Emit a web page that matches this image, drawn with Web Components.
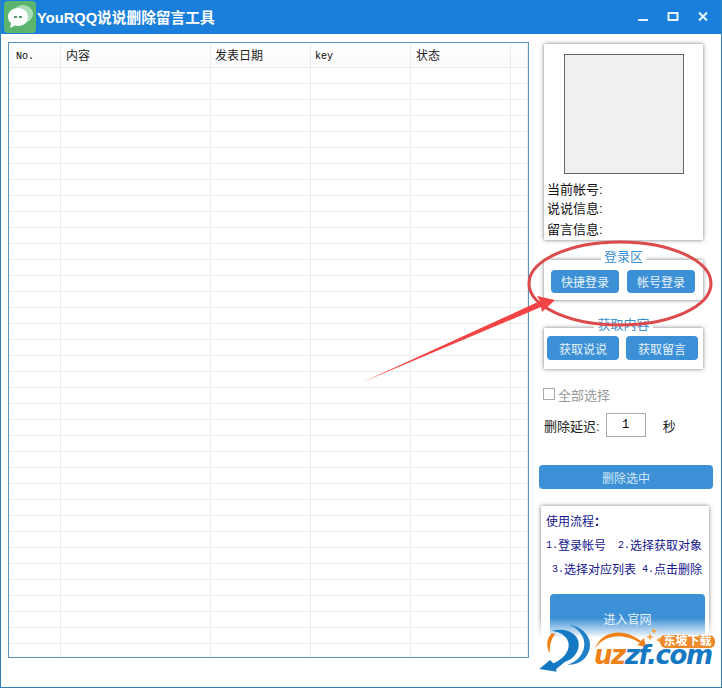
<!DOCTYPE html>
<html lang="zh">
<head>
<meta charset="utf-8">
<title>YouRQQ说说删除留言工具</title>
<style>
  html, body { margin: 0; padding: 0; background: #fff; }
  body { font-family: "Liberation Sans", "Noto Sans CJK SC", sans-serif; font-size: 13px; color: #111; }
</style>
</head>
<body>
<app-window>
  <title-bar slot="title" text="YouRQQ说说删除留言工具"></title-bar>
  <data-table slot="main"></data-table>

  <info-panel slot="side"></info-panel>

  <group-box slot="side" label="登录区" style="margin-top:20px; height:40px; padding:10px 8px 0 7px; gap:8px;">
    <flat-button style="width:68px; height:23px;">快捷登录</flat-button>
    <flat-button style="width:68px; height:23px;">帐号登录</flat-button>
  </group-box>

  <group-box slot="side" label="获取内容" style="margin-top:28px; height:41px; padding:8px 5px 0 3px; gap:7px;">
    <flat-button style="width:72px; height:24px;">获取说说</flat-button>
    <flat-button style="width:72px; height:24px;">获取留言</flat-button>
  </group-box>

  <delete-options slot="side"></delete-options>
  <flat-button slot="side" class="wide" style="display:flex; width:174px; height:24px; margin:28px 0 0 -5px; color:#d5e8f7;">删除选中</flat-button>
  <help-panel slot="side"></help-panel>

  <callout-mark slot="over"></callout-mark>
  <site-watermark slot="over"></site-watermark>
</app-window>

<script>
const CJK = '"Liberation Sans", "Noto Sans CJK SC", sans-serif';

class AppWindow extends HTMLElement {
  constructor() {
    super();
    const shadow = this.attachShadow({ mode: 'open' });
    shadow.innerHTML = `
      <style>
        :host { display: flex; flex-direction: column; position: relative; width: 722px; height: 688px;
                box-sizing: border-box; border: 1px solid #2f82b8; border-top: 0; background: #fff; overflow: hidden; }
        .body { display: flex; flex: 1; padding: 8px 8px 0 7px; gap: 15px; }
        .side { display: flex; flex-direction: column; width: 164px; padding-top: 2px; }
      </style>
      <slot name="title"></slot>
      <div class="body">
        <slot name="main"></slot>
        <div class="side"><slot name="side"></slot></div>
      </div>
      <slot name="over"></slot>`;
  }
}

class TitleBar extends HTMLElement {
  constructor() {
    super();
    const shadow = this.attachShadow({ mode: 'open' });
    const text = this.getAttribute('text') || '';
    shadow.innerHTML = `
      <style>
        :host { display: flex; align-items: center; height: 34px; margin: 0 -1px; background: #1a7fdb; color: #fff; flex: none; }
        .icon { width: 32px; height: 32px; margin: 0 1px 0 4px; }
        .name { font: bold 14.7px ${CJK}; flex: 1; padding-bottom: 2px; }
        .ctl { display: flex; align-items: center; gap: 18px; margin-right: 13px; }
        svg.c { display: block; width: 12px; height: 12px; }
      </style>
      <svg class="icon" viewBox="0 0 32 32">
        <rect width="32" height="32" rx="4" fill="#5cb56f"/>
        <ellipse cx="19" cy="13" rx="10" ry="9" fill="#a9dcb5"/>
        <path d="M14 7c6 0 10 4 10 9s-4 9-10 9c-1 0-2 0-3-.4L6 27l1-5c-2-1.500-3-3.800-3-6 0-5 4-9 10-9z" fill="#fff"/>
        <rect x="10" y="15" width="3" height="2" fill="#5a9a70"/>
        <rect x="15" y="15" width="3" height="2" fill="#5a9a70"/>
      </svg>
      <div class="name">${text}</div>
      <div class="ctl">
        <svg class="c" viewBox="0 0 12 12"><rect x="1" y="8" width="10" height="2" fill="#e4f6fc"/></svg>
        <svg class="c" viewBox="0 0 12 12"><rect x="1.500" y="2" width="9" height="7" fill="none" stroke="#e4f6fc" stroke-width="2"/></svg>
        <svg class="c" viewBox="0 0 12 12"><path d="M2 1.500l8 8M10 1.500l-8 8" fill="none" stroke="#e4f6fc" stroke-width="2"/></svg>
      </div>`;
  }
}

class DataTable extends HTMLElement {
  constructor() {
    super();
    const shadow = this.attachShadow({ mode: 'open' });
    const widths = [52, 150, 100, 100, 100, 17];
    const cols = widths.map(w => w + 'px').join(' ');
    const heads = [['No.', 'm first'], ['内容', ''], ['发表日期', 'tight'], ['key', 'm tight'], ['状态', ''], ['', '']];
    const head = heads.map(h => `<div class="th ${h[1]}">${h[0]}</div>`).join('');
    let rows = '';
    for (let i = 0; i < 37; i++) {
      rows += `<div class="row">${widths.map(() => '<div class="td"></div>').join('')}</div>`;
    }
    shadow.innerHTML = `
      <style>
        :host { display: block; width: 521px; height: 616px; box-sizing: border-box; border: 1px solid #5a94b8; background: #fff; overflow: hidden; flex: none; }
        .row, .head { display: grid; grid-template-columns: ${cols}; }
        .head { height: 24px; border-bottom: 1px solid #ececec; background: linear-gradient(#fff, #fbfbfb); }
        .row { height: 15px; border-bottom: 1px solid #ececec; }
        .th { font: 12px ${CJK}; line-height: 27px; padding-left: 5px; border-right: 1px solid #ececec; color: #222; }
        .th.m { font: 10px "Liberation Mono", monospace; line-height: 27px; color: #000; padding-left: 5px; }
        .th.first { padding-left: 7px; }
        .th.tight { padding-left: 4px; }
        .td { border-right: 1px solid #ececec; }
      </style>
      <div class="head">${head}</div>
      ${rows}`;
  }
}

class InfoPanel extends HTMLElement {
  constructor() {
    super();
    const shadow = this.attachShadow({ mode: 'open' });
    shadow.innerHTML = `
      <style>
        :host { display: block; width: 159px; height: 196px; box-sizing: border-box; padding-top: 10px; background: #fff;
                box-shadow: 0 0 4px #777; font: 13px ${CJK}; color: #111; }
        .pic { width: 120px; height: 120px; box-sizing: border-box; margin: 0 0 0 20px; background: #f0f0f0; border: 1px solid #666; }
        .lines { margin: 6px 0 0 3px; }
        .lines div { height: 20px; line-height: 20px; }
      </style>
      <div class="pic"></div>
      <div class="lines"><div style="height:19px">当前帐号:</div><div style="height:21px">说说信息:</div><div>留言信息:</div></div>`;
  }
}

class GroupBox extends HTMLElement {
  constructor() {
    super();
    const shadow = this.attachShadow({ mode: 'open' });
    shadow.innerHTML = `
      <style>
        :host { display: flex; position: relative; width: 159px; box-sizing: border-box; background: #fff; box-shadow: 0 0 4px #777; }
        .legend { position: absolute; left: 0; right: 0; top: -14px; text-align: center; line-height: 18px; font: 13px ${CJK}; color: #3a8fd0; }
        .legend span { background: #fff; padding: 0 3px; }
      </style>
      <div class="legend"><span>${this.getAttribute('label') || ''}</span></div>
      <slot></slot>`;
  }
}

class FlatButton extends HTMLElement {
  constructor() {
    super();
    const shadow = this.attachShadow({ mode: 'open' });
    shadow.innerHTML = `
      <style>
        :host { display: inline-flex; align-items: center; justify-content: center; flex: none; box-sizing: border-box;
                background: #3c90d6; color: #e8f3fb; border-radius: 4px; font: 12px ${CJK}; }
      </style>
      <slot></slot>`;
  }
}

class DeleteOptions extends HTMLElement {
  constructor() {
    super();
    const shadow = this.attachShadow({ mode: 'open' });
    shadow.innerHTML = `
      <style>
        :host { display: block; font: 13px ${CJK}; color: #222; margin-top: 19px; }
        .check { display: flex; align-items: center; height: 12px; gap: 3px; color: #9a9a9a; margin-left: -1px; }
        .box { width: 12px; height: 12px; box-sizing: border-box; border: 1px solid #aaa; background: #fff; }
        .delay { display: flex; align-items: center; margin-top: 13px; height: 24px; }
        .input { width: 40px; height: 24px; box-sizing: border-box; border: 1px solid #aaa; margin-left: 6px; text-align: center;
                 font: 12px "Liberation Mono", monospace; line-height: 22px; color: #000; }
        .unit { margin-left: 17px; }
      </style>
      <div class="check"><span class="box"></span><span>全部选择</span></div>
      <div class="delay"><span>删除延迟:</span><span class="input">1</span><span class="unit">秒</span></div>`;
  }
}

class HelpPanel extends HTMLElement {
  constructor() {
    super();
    const shadow = this.attachShadow({ mode: 'open' });
    shadow.innerHTML = `
      <style>
        :host { display: block; width: 168px; height: 170px; box-sizing: border-box; margin: 17px 0 0 -3px; padding: 4px 5px 0 5px;
                background: #fff; box-shadow: 0 0 4px #777; font: 12px ${CJK}; color: #14148c; }
        .line { display: flex; height: 24px; line-height: 24px; white-space: nowrap; }
        .n { display: inline-block; width: 12px; font: 10px/24px "Liberation Mono", monospace; }
        .go { height: 48px; margin: 12px 0 0 4px; width: 155px; background: #3c90d6; color: #e8f3fb; border-radius: 4px;
              display: flex; align-items: center; justify-content: center; }
      </style>
      <div class="line">使用流程<b>：</b></div>
      <div class="line"><span class="n">1.</span><span>登录帐号</span><span class="n" style="margin-left:12px">2.</span><span>选择获取对象</span></div>
      <div class="line" style="padding-left:6px"><span class="n">3.</span><span>选择对应列表</span><span class="n" style="margin-left:6px">4.</span><span>点击删除</span></div>
      <div class="go">进入官网</div>`;
  }
}

class CalloutMark extends HTMLElement {
  constructor() {
    super();
    const shadow = this.attachShadow({ mode: 'open' });
    shadow.innerHTML = `
      <style>
        :host { position: absolute; left: -1px; top: 0; width: 722px; height: 688px; pointer-events: none; }
        svg { display: block; }
      </style>
      <svg width="722" height="688" viewBox="0 0 722 688">
        <ellipse cx="620" cy="283.500" rx="91" ry="41.500" fill="none" stroke="#dc4a4c" stroke-width="3"/>
        <polygon points="363,382 540,301 537,296 555,300 542,312 541,307" fill="#f24444"/>
      </svg>`;
  }
}

class SiteWatermark extends HTMLElement {
  constructor() {
    super();
    const shadow = this.attachShadow({ mode: 'open' });
    shadow.innerHTML = `
      <style>
        :host { position: absolute; left: 529px; top: 618px; width: 191px; height: 69px; pointer-events: none; }
        .fade { position: absolute; left: 0; right: 0; top: 0; bottom: 0;
                background: linear-gradient(rgba(255,255,255,0), #fff 20px); }
        svg { position: absolute; left: 0; top: 0; }
        .site { position: absolute; left: 64px; top: 32px; font: italic bold 26px "DejaVu Sans", sans-serif; line-height: 10px;
                letter-spacing: -1.4px; white-space: nowrap; color: #1478c2; }
        .site b { color: #f08018; font-weight: bold; }
        .tag { position: absolute; left: 130px; top: 17px; width: 55px; height: 13px; background: #ef8a2c;
               border-radius: 5px 6px 5px 6px; color: #fff; font: bold 12px ${CJK}; line-height: 13px; text-align: center; }
      </style>
      <div class="fade"></div>
      <svg width="191" height="69" viewBox="0 0 191 69">
        <g transform="translate(6 2) scale(.3333)">
          <path d="M100 14C145 22 170 55 160 90 152 118 128 135 95 134 125 125 145 100 145 72 145 45 125 25 100 14z" fill="#1f80c8"/>
          <path d="M48 32C85 22 132 38 128 78 126 100 110 118 86 126L60 148 62 155 10 147 42 120 52 130C75 120 100 100 98 72 96 50 75 36 48 32z" fill="#1478c2"/>
          <path d="M48 40C30 55 30 85 42 100 40 80 44 58 58 42z" fill="#f08018"/>
        </g>
        <path d="M65 31C72 18 92 13 110 25l-3 2 9 2-2-9-3 3C92 8 70 14 65 31z" fill="#f08018"/>
        <path d="M120 15l1 3 3 1-3 1-1 3-1-3-3-1 3-1zM129 19l1 2 2 1-2 1-1 2-1-2-2-1 2-1zM124 10l1 2 2 1-2 1-1 2-1-2-2-1 2-1z" fill="#f2a04a"/>
      </svg>
      <div class="site"><b>uz</b>zf.com</div>
      <div class="tag">东坡下载</div>`;
  }
}

customElements.define('app-window', AppWindow);
customElements.define('title-bar', TitleBar);
customElements.define('data-table', DataTable);
customElements.define('info-panel', InfoPanel);
customElements.define('group-box', GroupBox);
customElements.define('flat-button', FlatButton);
customElements.define('delete-options', DeleteOptions);
customElements.define('help-panel', HelpPanel);
customElements.define('callout-mark', CalloutMark);
customElements.define('site-watermark', SiteWatermark);
</script>
</body>
</html>
